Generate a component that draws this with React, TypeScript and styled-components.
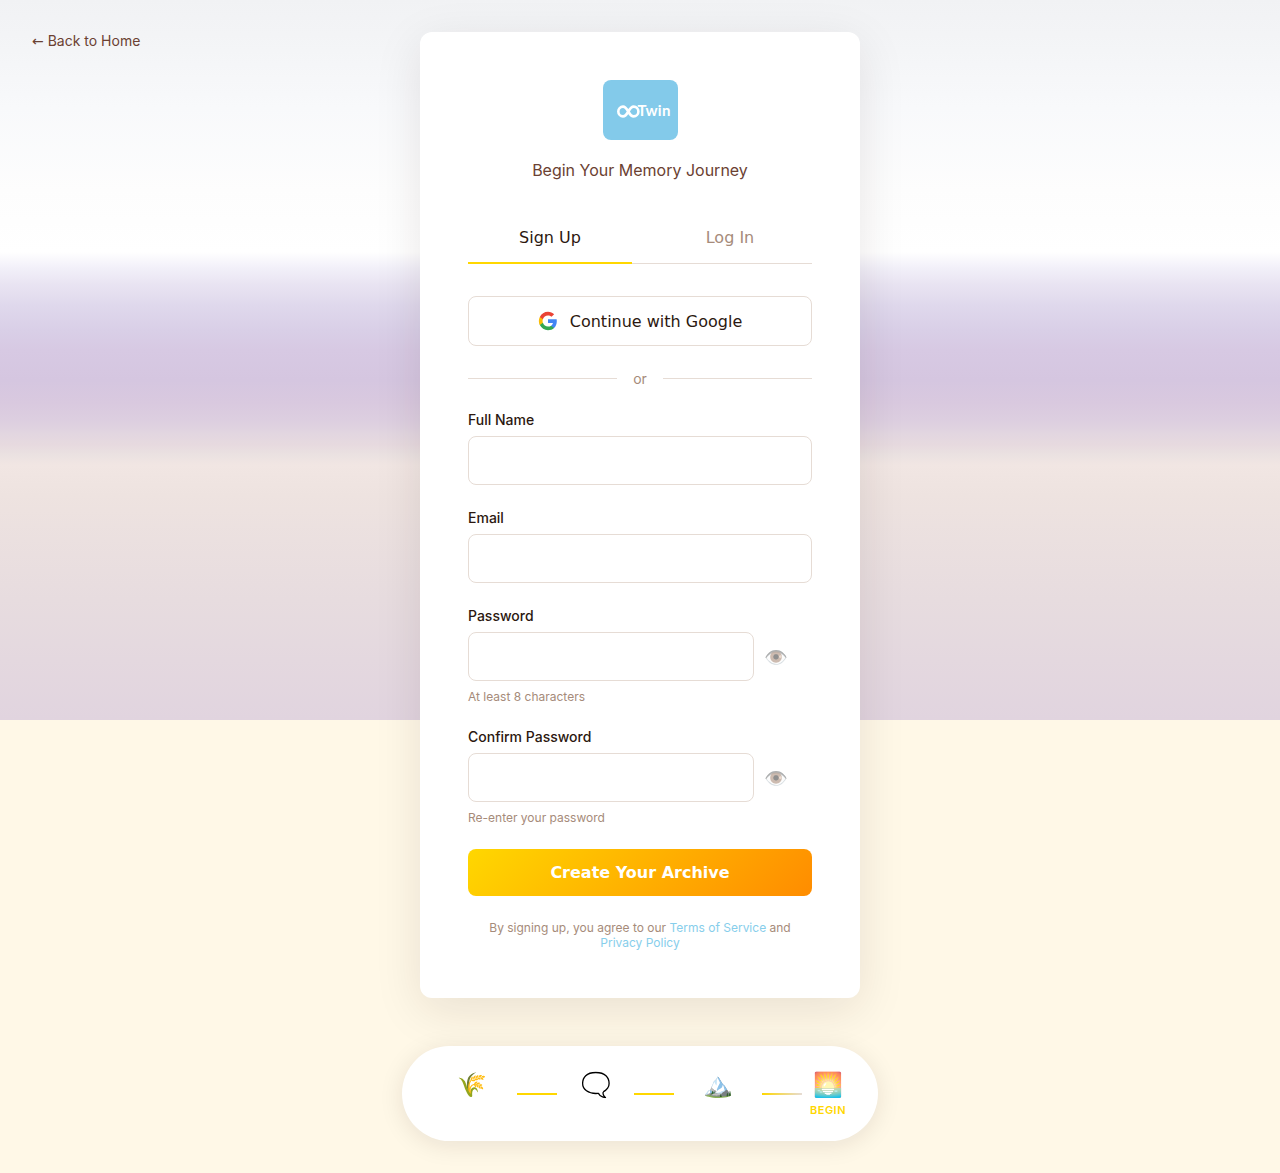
import React from "react";
import styled, { createGlobalStyle } from "styled-components";

const GlobalStyle = createGlobalStyle`
  *, *::before, *::after { box-sizing: border-box; }
  body {
    margin: 0;
    background: #fff8e7;
    font-family: Inter, "Noto Color Emoji", sans-serif;
    color: #2c1810;
  }
  button, input { margin: 0; font-family: "DejaVu Sans", sans-serif; font-size: 16px; }
`;

const Page = styled.div`
  position: relative;
  isolation: isolate;
  min-height: 1173px;
  padding: 32px 0;
  display: flex;
  flex-direction: column;
  align-items: center;
`;

const Sky = styled.div`
  position: absolute;
  z-index: -1;
  inset: 0 0 auto;
  height: 720px;
  background: linear-gradient(
    to bottom,
    #f1f2f4 0, #f4f5f7 50px, #f8f9fb 108px, #fdfdfd 190px, #ffffff 252px,
    #f2f0f9 268px, #e9e4f2 284px, #dfd8ec 306px, #d9cfe7 330px, #d7c9e3 350px,
    #d5c6e0 380px, #d9c9df 403px, #ddcfe0 422px, #e2d6e0 434px, #e7dadf 445px,
    #eae1e1 454px, #f1e6e3 465px, #eee3e0 495px, #e7dcdf 600px, #e1d4df 720px
  );
`;

const BackLink = styled.a`
  position: absolute;
  top: 32px;
  left: 32px;
  font-size: 14px;
  line-height: 18px;
  color: #6b4132;
  text-decoration: none;
`;

const Arrow = styled.span`
  font-family: "DejaVu Sans", sans-serif;
`;

const Card = styled.main`
  width: 440px;
  height: 966px;
  padding: 48px;
  background: #fff;
  border-radius: 12px;
  box-shadow: 0 12px 48px rgba(44, 24, 16, 0.1);
`;

const Header = styled.header`
  display: flex;
  flex-direction: column;
  align-items: center;
`;

const Logo = styled.div`
  width: 75px;
  height: 60px;
  padding: 0 7px 1px 14px;
  display: flex;
  align-items: center;
  border-radius: 8px;
  background: #83caea;
  color: #fff;
  font: 700 15px/20px Lato, sans-serif;
  letter-spacing: 0.3px;

  svg { flex: none; margin: 3px -2px 0 0; }
`;

const Subtitle = styled.p`
  margin: 20px 0 0;
  font-size: 16px;
  line-height: 20px;
  color: #6b4132;
`;

const Tabs = styled.div`
  display: flex;
  gap: 16px;
  height: 52px;
  margin: 32px 0;
  border-bottom: 1px solid #e6dcd5;
`;

const Tab = styled.button<{ $active?: boolean }>`
  flex: 1;
  height: 52px;
  padding: 1px 0 0;
  border: 0;
  border-bottom: 2px solid ${(p) => (p.$active ? "#ffd700" : "transparent")};
  background: none;
  font-weight: 500;
  color: ${(p) => (p.$active ? "#2c1810" : "#a68b7a")};
`;

const GoogleButton = styled.button`
  width: 100%;
  height: 50px;
  display: flex;
  align-items: center;
  justify-content: center;
  gap: 12px;
  border: 1px solid #e6dcd5;
  border-radius: 8px;
  background: #fff;
  color: #2c1810;
  font-weight: 500;
`;

const Divider = styled.div`
  display: flex;
  align-items: center;
  gap: 16px;
  height: 17px;
  margin: 24px 0;
  font-size: 14px;
  color: #a68b7a;

  &::before, &::after { content: ""; flex: 1; height: 1px; background: #e6dcd5; }
`;

const Field = styled.div`
  margin-bottom: 24px;
`;

const Label = styled.label`
  display: block;
  height: 17px;
  margin-bottom: 8px;
  font-size: 14px;
  line-height: 17px;
  font-weight: 500;
`;

const InputRow = styled.div`
  display: flex;
  align-items: center;
`;

const Input = styled.input<{ $short?: boolean }>`
  width: ${(p) => (p.$short ? "286px" : "100%")};
  height: 49px;
  padding: 14px 16px;
  border: 1px solid #e6dcd5;
  border-radius: 8px;
  background: #fff;
`;

const Reveal = styled.button`
  padding: 2px 0 0;
  margin-left: 10px;
  border: 0;
  background: none;
  font-family: "Noto Color Emoji", sans-serif;
  font-size: 19.2px;
  line-height: 24px;
  opacity: 0.5;
`;

const Hint = styled.small`
  display: block;
  height: 15px;
  margin-top: 8px;
  font-size: 12px;
  line-height: 15px;
  color: #a68b7a;
`;

const Submit = styled.button`
  width: 100%;
  height: 47px;
  border: 0;
  border-radius: 8px;
  background: linear-gradient(135deg, #ffd700, #ff8c00);
  color: #fff;
  font-weight: 600;
`;

const Terms = styled.p`
  margin: 24px 0 0;
  text-align: center;
  font-size: 12px;
  line-height: 15px;
  color: #a68b7a;

  a { color: #87ceeb; text-decoration: none; }
`;

const Journey = styled.nav`
  display: flex;
  gap: 8px;
  height: 95px;
  margin-top: 48px;
  padding: 24px 32px;
  border-radius: 50px;
  background: #fff;
  box-shadow: 0 4px 24px rgba(44, 24, 16, 0.1);
`;

const Step = styled.div<{ $width: number }>`
  width: ${(p) => p.$width}px;
  display: flex;
  flex-direction: column;
  align-items: center;
`;

const StepIcon = styled.span<{ $nudge?: boolean }>`
  height: 29px;
  padding-left: ${(p) => (p.$nudge ? "2px" : "0")};
  font-family: "Noto Color Emoji", sans-serif;
  font-size: 24px;
  line-height: 31px;
`;

const StepName = styled.span`
  margin-top: 5px;
  font-size: 11px;
  line-height: 13px;
  font-weight: 600;
  letter-spacing: 0.5px;
  white-space: nowrap;
  color: #ffd700;
`;

const Connector = styled.div<{ $fading?: boolean }>`
  width: 40px;
  height: 2px;
  margin-top: 23px;
  background: ${(p) => (p.$fading ? "linear-gradient(90deg, #ffd700, #e6dcd5)" : "#ffd700")};
`;

const GoogleIcon = () => (
  <svg width="20" height="20" viewBox="0 0 24 24" aria-hidden="true">
    <path fill="#4285F4" d="M22.56 12.25c0-.78-.07-1.53-.2-2.25H12v4.26h5.92c-.26 1.37-1.04 2.53-2.21 3.31v2.77h3.57c2.08-1.92 3.28-4.74 3.28-8.09z" />
    <path fill="#34A853" d="M12 23c2.97 0 5.46-.98 7.28-2.66l-3.57-2.77c-.98.66-2.23 1.06-3.71 1.06-2.86 0-5.29-1.93-6.16-4.53H2.18v2.84C3.99 20.53 7.7 23 12 23z" />
    <path fill="#FBBC05" d="M5.84 14.09c-.22-.66-.35-1.36-.35-2.09s.13-1.43.35-2.09V7.07H2.18C1.43 8.55 1 10.22 1 12s.43 3.45 1.18 4.93l2.85-2.22.81-.62z" />
    <path fill="#EA4335" d="M12 5.38c1.62 0 3.06.56 4.21 1.64l3.15-3.15C17.45 2.09 14.97 1 12 1 7.7 1 3.99 3.47 2.18 7.07l3.66 2.84c.87-2.6 3.3-4.53 6.16-4.53z" />
  </svg>
);

const InfinityMark = () => (
  <svg width="23" height="13" viewBox="0 0 23 13" fill="none" stroke="#fff" strokeWidth="2.6" aria-hidden="true">
    <path d="M11.3 6.5C9.6 3.4 8.2 1.6 6 1.6a4.7 4.9 0 0 0 0 9.8c2.2 0 3.6-1.8 5.3-4.9C13 3.4 14.6 1.6 16.7 1.6a4.7 4.9 0 0 1 0 9.8c-2.1 0-3.7-1.8-5.4-4.9z" />
  </svg>
);

function PasswordField({ id, label, hint }: { id: string; label: string; hint: string }) {
  return (
    <Field>
      <Label htmlFor={id}>{label}</Label>
      <InputRow>
        <Input id={id} type="password" $short />
        <Reveal type="button">👁️</Reveal>
      </InputRow>
      <Hint>{hint}</Hint>
    </Field>
  );
}

export default function App() {
  return (
    <Page>
      <GlobalStyle />
      <Sky />
      <BackLink href="#"><Arrow>←</Arrow> Back to Home</BackLink>
      <Card>
        <Header>
          <Logo><InfinityMark />Twin</Logo>
          <Subtitle>Begin Your Memory Journey</Subtitle>
        </Header>
        <Tabs>
          <Tab $active>Sign Up</Tab>
          <Tab>Log In</Tab>
        </Tabs>
        <GoogleButton><GoogleIcon />Continue with Google</GoogleButton>
        <Divider>or</Divider>
        <Field>
          <Label htmlFor="name">Full Name</Label>
          <Input id="name" />
        </Field>
        <Field>
          <Label htmlFor="email">Email</Label>
          <Input id="email" type="email" />
        </Field>
        <PasswordField id="password" label="Password" hint="At least 8 characters" />
        <PasswordField id="confirm" label="Confirm Password" hint="Re-enter your password" />
        <Submit>Create Your Archive</Submit>
        <Terms>
          By signing up, you agree to our <a href="#">Terms of Service</a> and <a href="#">Privacy Policy</a>
        </Terms>
      </Card>
      <Journey>
        <Step $width={75}><StepIcon $nudge>🌾</StepIcon></Step>
        <Connector />
        <Step $width={61}><StepIcon $nudge>🗨️</StepIcon></Step>
        <Connector />
        <Step $width={72}><StepIcon>🏔️</StepIcon></Step>
        <Connector $fading />
        <Step $width={36}><StepIcon>🌅</StepIcon><StepName>BEGIN</StepName></Step>
      </Journey>
    </Page>
  );
}
